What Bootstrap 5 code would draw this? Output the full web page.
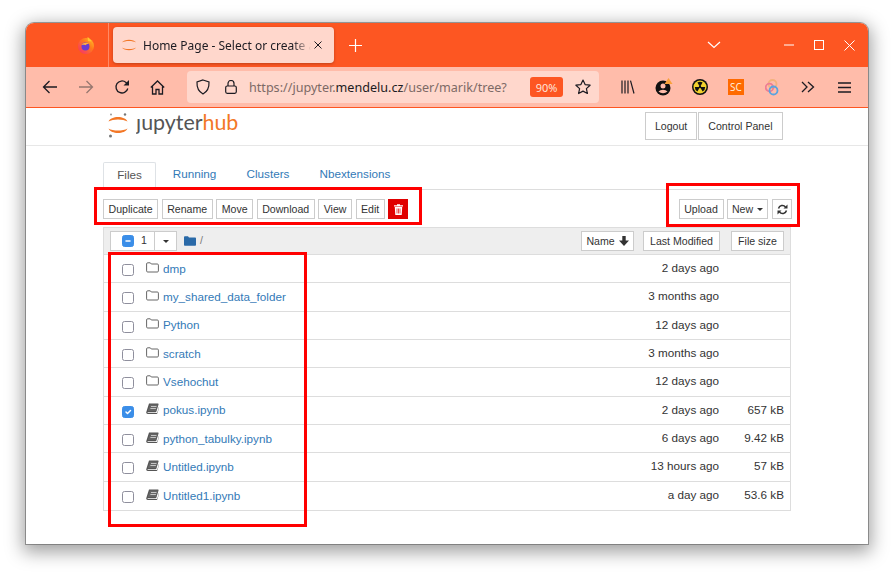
<!DOCTYPE html>
<html lang="en">
<head>
<meta charset="utf-8">
<title>Home Page - Select or create a notebook</title>
<link rel="stylesheet" href="https://cdn.jsdelivr.net/npm/bootstrap@5.3.0/dist/css/bootstrap.min.css">
<style>
html,body{height:100%;background:#fff;overflow:hidden}
body{padding:23px 26px 29px;font:11.7px/1.3 "Liberation Sans",Arial,sans-serif;color:#333}
svg{display:block;flex:none}
.winframe{position:relative;height:521px;background:#fff;border-radius:8px 8px 0 0;box-shadow:0 0 0 1px rgba(90,90,90,.55),0 5px 18px 3px rgba(0,0,0,.38);overflow:visible}
.titlebar{height:44px;background:#fd5622;border-radius:8px 8px 0 0;padding-left:52px;color:#fff}
.ffslot{width:16px;margin-right:14px}
.tabsep{width:1px;height:44px;background:#ff8a66;margin-right:4px}
.brtab{width:221px;height:36px;background:#ffd7cc;border-radius:4px;padding:0 11px 0 8px;color:#1c1b22;font:12px "Noto Sans",sans-serif;box-shadow:0 1px 3px rgba(0,0,0,.25)}
.tabtext{width:170px;margin-left:6px;white-space:nowrap;-webkit-mask-image:linear-gradient(90deg,#000 88%,transparent 99%);mask-image:linear-gradient(90deg,#000 88%,transparent 99%)}
.plusslot{margin-left:15px}
.winctl{margin-left:auto;padding-right:13px;gap:20px}
.chevslot{margin-right:43px}
.toolbar{height:41px;background:#ffbcaa;border-bottom:1px solid #fd5622;padding-left:6px;color:#1c1b22}
.tslot{width:36px;height:32px}
.tslot.homeslot{width:35px}
.urlbox{width:412px;height:32px;margin-left:12px;background:#ffd7cc;border-radius:4px;padding-left:8px;font:12.6px "Noto Sans",sans-serif;color:#7d6a66;white-space:nowrap}
.locksvg{margin-left:14px}
.urltext{margin-left:12px;width:281px}
.urltext b{font-weight:400;color:#1c1b22}
.zoompill{width:33px;height:20px;background:#fd5622;color:#ffe3da;border-radius:3px;font-size:11px}
.starsvg{margin-left:12px}
.rightgroup{margin-left:11px}
.scbox{width:16px;height:16px;background:#ff6a00;color:#ffe9d8;font:10px "Noto Sans",sans-serif}
.hubhead{height:38px;border-bottom:1px solid #e7e7e7;padding:4px 85px 0 82px}
.hublogo{gap:8px;font:21.4px/1 Lato,sans-serif;color:#555}
.hublogo .wordmark{margin-bottom:4px}
.dotlessj{display:inline-block;clip-path:inset(26% 0 0 0)}
.hubword{color:#f37726}
.flatbtn{--bs-btn-border-radius:0;--bs-btn-padding-y:0;--bs-btn-padding-x:4.5px;--bs-btn-font-size:10.6px;--bs-btn-line-height:1;--bs-btn-color:#333;--bs-btn-border-color:#ccc;--bs-btn-bg:#fff;--bs-btn-hover-bg:#fff;--bs-btn-hover-color:#333;--bs-btn-hover-border-color:#ccc;font-family:"Liberation Sans",Arial,sans-serif;height:20px;display:inline-flex;align-items:center;justify-content:center}
.hubhead .flatbtn{height:28px;--bs-btn-padding-x:9.5px;margin-left:1px}
.hubhead .flatbtn.logoutbtn{--bs-btn-padding-x:8.5px}
.wbdy{padding:16px 0 0 77px;width:764px}
.filetabs{height:28px;--bs-nav-tabs-border-color:#ddd;--bs-nav-tabs-border-radius:0;--bs-nav-link-padding-x:0;--bs-nav-link-padding-y:0;font-size:11.7px;width:688px}
.filetabs .nav-link{height:28px;line-height:24px;text-align:center;color:#337ab7;margin-right:0;border-radius:2px 2px 0 0}
.filetabs .nav-link.active{color:#555}
.filetabs .tw1{width:53px}.filetabs .tw2{width:77px}.filetabs .tw3{width:70px}.filetabs .tw4{width:96px;margin-left:4px}
.actionbar{height:37px;width:689px;gap:3.5px;padding-top:9px;align-items:flex-start}
.trashbtn{width:20px;--bs-btn-padding-x:0;--bs-btn-bg:#e00000;--bs-btn-hover-bg:#e00000;--bs-btn-border-color:#e00000;--bs-btn-hover-border-color:#e00000}
.uploadbtn{width:45px;--bs-btn-padding-x:0}
.newbtn{width:41px;--bs-btn-padding-x:0}
.refreshbtn{width:20px;--bs-btn-padding-x:0;margin-left:.5px}
.filelist{width:688px;border:1px solid #ddd;border-top:0}
.filehead{height:28px;background:#eee;border-top:1px solid #ddd;border-bottom:1px solid #ddd;padding:0 6px 0 6px}
.selgroup{width:67px;height:20px;background:#fff;border:1px solid #ccc;margin-right:7px}
.selcheck{width:44px;gap:7px;padding-left:11px;border-right:1px solid #ccc;height:100%;font-size:10.6px}
.selcaret{flex:1}
.carety{width:0;height:0;border:3.5px solid transparent;border-top-color:#333;border-bottom:0}
.crumbs{gap:4px;color:#777;font-size:10.6px}
.namebtn{width:53px}
.lastbtn{width:77px;margin-left:9px}
.sizebtn{width:53px;margin-left:11px}
.filerow{height:28.33px;border-bottom:1px solid #ddd;padding:0 6px 0 18px}
.filerow:last-child{border-bottom:0}
.form-check-input.tickbox{width:12px;height:12px;margin:3px 12px 0 0;border:1px solid #8f8f9d;border-radius:2.5px;flex:none}
.form-check-input.tickbox:checked,.form-check-input.tickbox:indeterminate{background-color:#3b8ee8;border-color:#3b8ee8}
.filerow svg{margin-right:4px;margin-bottom:3px}
.filerow a{color:#337ab7;text-decoration:none;padding-bottom:1px}
.fdate{margin-left:auto;width:121px;text-align:right;padding-bottom:2px}
.fsize{width:65px;text-align:right;padding-bottom:2px}
.redmark{position:absolute;border:3.5px solid #f00;pointer-events:none}
.rm1{left:68px;top:164px;width:328px;height:38px}
.rm2{left:640px;top:160px;width:134px;height:44px}
.rm3{left:82px;top:229px;width:199px;height:275px}
</style>
</head>
<body>
<div class="winframe">
  <div class="titlebar d-flex align-items-center">
    <div class="ffslot">
      <svg width="16" height="17" viewBox="0 0 16 17"><defs><linearGradient id="ffg" x1="0" y1="1" x2="1" y2="0"><stop offset="0" stop-color="#f5267a"/><stop offset=".6" stop-color="#ff7a1a"/><stop offset="1" stop-color="#ffc62e"/></linearGradient></defs><circle cx="8" cy="9" r="8" fill="url(#ffg)"/><path d="M9.500 0c1.500 1 3.500 2.500 4 4.500L10 4z" fill="#ffc62e"/><circle cx="7.500" cy="9.500" r="4" fill="#6a3bd0"/><path d="M3.500 8c1.500-2.500 5.500-3 7.500-1-1.500-.2-2.800.2-3.500 1.200C6.500 7.600 5 7.600 3.500 8z" fill="#ffb13a"/></svg>
    </div>
    <div class="tabsep"></div>
    <div class="brtab d-flex align-items-center">
      <svg width="16" height="16" viewBox="0 0 16 16"><path d="M1 5.500C3 1.800 13 1.800 15 5.500 12 3.500 4 3.500 1 5.500zM1 10.500C3 14.200 13 14.200 15 10.500 12 12.500 4 12.500 1 10.500z" fill="#f37726"/></svg>
      <span class="tabtext">Home Page - Select or create a</span>
      <svg class="ms-auto" width="10" height="10" viewBox="0 0 10 10"><path d="M1.500 1.500l7 7M8.500 1.500l-7 7" stroke="#1c1b22" stroke-width="1" fill="none"/></svg>
    </div>
    <div class="plusslot"><svg width="13" height="13" viewBox="0 0 13 13"><path d="M6.500 0v13M0 6.500h13" stroke="#fff" stroke-width="1.200"/></svg></div>
    <div class="winctl d-flex align-items-center">
      <svg class="chevslot" width="14" height="8" viewBox="0 0 14 8"><path d="M1 1l6 5.500L13 1" stroke="#fff" stroke-width="1.200" fill="none"/></svg>
      <svg width="10" height="10" viewBox="0 0 10 10"><path d="M0 5h10" stroke="#fff" stroke-width="1"/></svg>
      <svg width="10" height="10" viewBox="0 0 10 10"><rect x=".5" y=".5" width="9" height="9" stroke="#fff" fill="none"/></svg>
      <svg width="11" height="11" viewBox="0 0 11 11"><path d="M.5.500l10 10M10.500.500l-10 10" stroke="#fff" stroke-width="1" fill="none"/></svg>
    </div>
  </div>
  <div class="toolbar d-flex align-items-center">
    <div class="tslot d-flex align-items-center justify-content-center"><svg width="16" height="14" viewBox="0 0 16 14"><path d="M15 7H1.500M7.500 1L1.500 7l6 6" stroke="#1c1b22" stroke-width="1.300" fill="none"/></svg></div>
    <div class="tslot d-flex align-items-center justify-content-center"><svg width="16" height="14" viewBox="0 0 16 14"><path d="M1 7h13.500M8.500 1l6 6-6 6" stroke="#97776f" stroke-width="1.300" fill="none"/></svg></div>
    <div class="tslot d-flex align-items-center justify-content-center"><svg width="16" height="16" viewBox="0 0 16 16"><path d="M13.800 9.500A6 6 0 1 1 12 3.500L14.500 5.500" stroke="#1c1b22" stroke-width="1.300" fill="none"/><path d="M15 1v5.500H9.500z" fill="#1c1b22"/></svg></div>
    <div class="tslot homeslot d-flex align-items-center justify-content-center"><svg width="15" height="15" viewBox="0 0 15 15"><path d="M.8 7.500L7.500 1l6.700 6.500M2.500 6.500V14h3.500V9.500h3V14h3.500V6.500" stroke="#1c1b22" stroke-width="1.300" fill="none"/></svg></div>
    <div class="urlbox d-flex align-items-center">
      <svg width="16" height="16" viewBox="0 0 16 16"><path d="M8 1l6 2c.3 5.500-1.500 9.500-6 12C3.500 12.500 1.700 8.500 2 3z" stroke="#1c1b22" stroke-width="1.200" fill="none"/></svg>
      <svg class="locksvg" width="12" height="14" viewBox="0 0 12 14"><rect x=".7" y="6" width="10.600" height="7.300" rx="1.500" stroke="#1c1b22" stroke-width="1.200" fill="none"/><path d="M3 6V3.500a3 3 0 0 1 6 0V6" stroke="#1c1b22" stroke-width="1.200" fill="none"/></svg>
      <span class="urltext">https://jupyter.<b>mendelu.cz</b>/user/marik/tree?</span>
      <span class="zoompill d-flex align-items-center justify-content-center">90%</span>
      <svg class="starsvg" width="16" height="16" viewBox="0 0 16 16"><path d="M8 1l2.100 4.600 5 .6-3.700 3.400 1 4.900L8 12.100l-4.400 2.400 1-4.900L.9 6.200l5-.6z" stroke="#1c1b22" stroke-width="1.200" fill="none" stroke-linejoin="round"/></svg>
    </div>
    <div class="rightgroup d-flex align-items-center">
      <div class="tslot d-flex align-items-center justify-content-center"><svg width="14" height="14" viewBox="0 0 14 14"><path d="M1 .5v13M4 .5v13M7 .5v13M9.500.7l3.500 12.800" stroke="#1c1b22" stroke-width="1.200" fill="none"/></svg></div>
      <div class="tslot d-flex align-items-center justify-content-center"><svg width="18" height="18" viewBox="0 0 18 18"><circle cx="8" cy="10" r="7.500" fill="#111"/><circle cx="8" cy="8" r="2.500" fill="#ffbcaa"/><path d="M3.500 13.500a5.500 4 0 0 1 9 0 7 7 0 0 1-9 0z" fill="#ffbcaa"/><path d="M13.500 0l4 6h-8z" fill="#f8a13a"/></svg></div>
      <div class="tslot d-flex align-items-center justify-content-center"><svg width="16" height="16" viewBox="0 0 16 16"><circle cx="8" cy="8" r="8" fill="#111"/><circle cx="8" cy="8" r="6.500" fill="#f2d22e"/><circle cx="8" cy="8" r="1.200" fill="#111"/><path d="M8 8L5.400 3.500a5.200 5.200 0 0 1 5.200 0zM8 8l5.200 0a5.200 5.200 0 0 1-2.600 4.500zM8 8l-2.600 4.500A5.200 5.200 0 0 1 2.800 8z" fill="#111"/></svg></div>
      <div class="tslot d-flex align-items-center justify-content-center"><span class="scbox d-flex align-items-center justify-content-center">SC</span></div>
      <div class="tslot d-flex align-items-center justify-content-center"><svg width="14" height="17" viewBox="0 0 14 17"><circle cx="7.500" cy="5" r="4" stroke="#f3b27d" stroke-width="1.800" fill="none"/><circle cx="4.500" cy="8.500" r="3.800" stroke="#ee7d95" stroke-width="1.800" fill="none"/><circle cx="8.500" cy="11.500" r="4" stroke="#5ba3e0" stroke-width="1.800" fill="none"/></svg></div>
      <div class="tslot d-flex align-items-center justify-content-center"><svg width="14" height="12" viewBox="0 0 14 12"><path d="M1 1l5 5-5 5M7 1l5.500 5L7 11" stroke="#1c1b22" stroke-width="1.300" fill="none"/></svg></div>
      <div class="tslot d-flex align-items-center justify-content-center"><svg width="13" height="11" viewBox="0 0 13 11"><path d="M0 1h13M0 5.500h13M0 10h13" stroke="#1c1b22" stroke-width="1.300"/></svg></div>
    </div>
  </div>

  <div class="hubhead d-flex justify-content-between align-items-start">
    <div class="hublogo d-flex align-items-center">
      <svg width="20" height="26" viewBox="0 0 20 26"><circle cx="3" cy="2.500" r="1" fill="#9a9a9a"/><circle cx="17" cy="2.500" r="1.200" fill="#777"/><circle cx="2.500" cy="24" r="1.500" fill="#777"/><path d="M.5 9.500C3 3.500 17 3.500 19.500 9.500 15 6.800 5 6.800.5 9.500zM.5 16.500C3 22.500 17 22.500 19.500 16.500 15 19.200 5 19.200.5 16.500z" fill="#f37726"/></svg>
      <span class="wordmark"><span class="dotlessj">j</span>upyter<span class="hubword">hub</span></span>
    </div>
    <div class="d-flex">
      <a class="btn flatbtn logoutbtn" href="#">Logout</a>
      <a class="btn flatbtn" href="#">Control Panel</a>
    </div>
  </div>

  <div class="wbdy">
    <ul class="nav nav-tabs filetabs">
      <li class="nav-item tw1"><a class="nav-link active" href="#">Files</a></li>
      <li class="nav-item tw2"><a class="nav-link border-0" href="#">Running</a></li>
      <li class="nav-item tw3"><a class="nav-link border-0" href="#">Clusters</a></li>
      <li class="nav-item tw4"><a class="nav-link border-0" href="#">Nbextensions</a></li>
    </ul>
    <div class="actionbar d-flex">
      <button class="btn flatbtn">Duplicate</button>
      <button class="btn flatbtn">Rename</button>
      <button class="btn flatbtn">Move</button>
      <button class="btn flatbtn">Download</button>
      <button class="btn flatbtn">View</button>
      <button class="btn flatbtn">Edit</button>
      <button class="btn flatbtn trashbtn" aria-label="Delete"><svg width="9" height="11" viewBox="0 0 9 11"><path d="M3 1.200V.3h3v.9h3V2.400H0V1.200zM.8 3h7.400l-.5 8H1.300z" fill="#fff"/><path d="M3 4.500V9.500M4.500 4.500V9.500M6 4.500V9.500" stroke="#e00000" stroke-width=".7"/></svg></button>
      <button class="btn flatbtn uploadbtn ms-auto">Upload</button>
      <button class="btn flatbtn newbtn gap-1">New <span class="carety"></span></button>
      <button class="btn flatbtn refreshbtn" aria-label="Refresh"><svg width="11" height="11" viewBox="0 0 11 11"><path d="M1.500 4.500A4 4 0 0 1 8.500 3" stroke="#333" stroke-width="1.500" fill="none"/><path d="M10.500.500v4h-4z" fill="#333"/><path d="M9.500 6.500A4 4 0 0 1 2.500 8" stroke="#333" stroke-width="1.500" fill="none"/><path d="M.5 10.500v-4h4z" fill="#333"/></svg></button>
    </div>
    <div class="filelist">
      <div class="filehead d-flex align-items-center">
        <div class="selgroup d-flex align-items-center">
          <div class="selcheck d-flex align-items-center"><input class="form-check-input tickbox m-0" type="checkbox" id="selall" aria-label="Select all"><span>1</span></div>
          <div class="selcaret d-flex justify-content-center"><span class="carety"></span></div>
        </div>
        <div class="crumbs d-flex align-items-center"><svg width="12" height="10" viewBox="0 0 12 10"><path d="M0 1.500C0 .7.500.3 1 .3h3l1 1.200h6c.5 0 1 .4 1 1V9c0 .5-.5.8-1 .8H1C.5 9.800 0 9.500 0 9z" fill="#2a6aa8"/></svg><span>/</span></div>
        <button class="btn flatbtn namebtn ms-auto gap-1">Name <svg width="10" height="10" viewBox="0 0 10 10"><path d="M3.300 0h3.400v4.500H10L5 10 0 4.500h3.300z" fill="#333"/></svg></button>
        <button class="btn flatbtn lastbtn">Last Modified</button>
        <button class="btn flatbtn sizebtn">File size</button>
      </div>
      <div class="filerow d-flex align-items-center"><input class="form-check-input tickbox" type="checkbox" aria-label="select"><svg width="13" height="11" viewBox="0 0 13 11"><use href="#ifold"/></svg><a href="#">dmp</a><span class="fdate">2 days ago</span><span class="fsize"></span></div>
      <div class="filerow d-flex align-items-center"><input class="form-check-input tickbox" type="checkbox" aria-label="select"><svg width="13" height="11" viewBox="0 0 13 11"><use href="#ifold"/></svg><a href="#">my_shared_data_folder</a><span class="fdate">3 months ago</span><span class="fsize"></span></div>
      <div class="filerow d-flex align-items-center"><input class="form-check-input tickbox" type="checkbox" aria-label="select"><svg width="13" height="11" viewBox="0 0 13 11"><use href="#ifold"/></svg><a href="#">Python</a><span class="fdate">12 days ago</span><span class="fsize"></span></div>
      <div class="filerow d-flex align-items-center"><input class="form-check-input tickbox" type="checkbox" aria-label="select"><svg width="13" height="11" viewBox="0 0 13 11"><use href="#ifold"/></svg><a href="#">scratch</a><span class="fdate">3 months ago</span><span class="fsize"></span></div>
      <div class="filerow d-flex align-items-center"><input class="form-check-input tickbox" type="checkbox" aria-label="select"><svg width="13" height="11" viewBox="0 0 13 11"><use href="#ifold"/></svg><a href="#">Vsehochut</a><span class="fdate">12 days ago</span><span class="fsize"></span></div>
      <div class="filerow d-flex align-items-center"><input class="form-check-input tickbox" type="checkbox" checked aria-label="select"><svg width="13" height="11" viewBox="0 0 13 11"><use href="#ibook"/></svg><a href="#">pokus.ipynb</a><span class="fdate">2 days ago</span><span class="fsize">657 kB</span></div>
      <div class="filerow d-flex align-items-center"><input class="form-check-input tickbox" type="checkbox" aria-label="select"><svg width="13" height="11" viewBox="0 0 13 11"><use href="#ibook"/></svg><a href="#">python_tabulky.ipynb</a><span class="fdate">6 days ago</span><span class="fsize">9.42 kB</span></div>
      <div class="filerow d-flex align-items-center"><input class="form-check-input tickbox" type="checkbox" aria-label="select"><svg width="13" height="11" viewBox="0 0 13 11"><use href="#ibook"/></svg><a href="#">Untitled.ipynb</a><span class="fdate">13 hours ago</span><span class="fsize">57 kB</span></div>
      <div class="filerow d-flex align-items-center"><input class="form-check-input tickbox" type="checkbox" aria-label="select"><svg width="13" height="11" viewBox="0 0 13 11"><use href="#ibook"/></svg><a href="#">Untitled1.ipynb</a><span class="fdate">a day ago</span><span class="fsize">53.6 kB</span></div>
    </div>
  </div>
  <div class="redmark rm1"></div>
  <div class="redmark rm2"></div>
  <div class="redmark rm3"></div>
</div>
<svg width="0" height="0" class="position-absolute">
  <defs>
    <g id="ifold"><path d="M.6 2C.6 1.200 1 .8 1.700.8h2.600l1 1.200h6c.7 0 1.100.4 1.100 1.100v5.800c0 .7-.4 1.100-1.100 1.100H1.700c-.7 0-1.100-.4-1.100-1.100z" stroke="#666" stroke-width="1" fill="none"/></g>
    <g id="ibook"><path d="M3 .5h9c.5 0 .7.400.5.900L10.400 8.500c-.2.500-.5.700-1 .700H2c-.8 0-.7.800 0 .8h8.500c.5 0 .7-.3.900-.7l1.700-6v1L11.500 10c-.2.600-.6 1-1.200 1H1.800C.6 11 0 10 .3 9z" fill="#555"/><path d="M1.800 7.800L4.200 1.500H12L10 8H2.200z" fill="#666"/><path d="M5 3.500h5.500M4.400 5.500h5.500" stroke="#eee" stroke-width=".7"/></g>
  </defs>
</svg>
<script>document.getElementById('selall').indeterminate=true;</script>
<script src="https://cdn.jsdelivr.net/npm/bootstrap@5.3.0/dist/js/bootstrap.bundle.min.js"></script>
</body>
</html>
